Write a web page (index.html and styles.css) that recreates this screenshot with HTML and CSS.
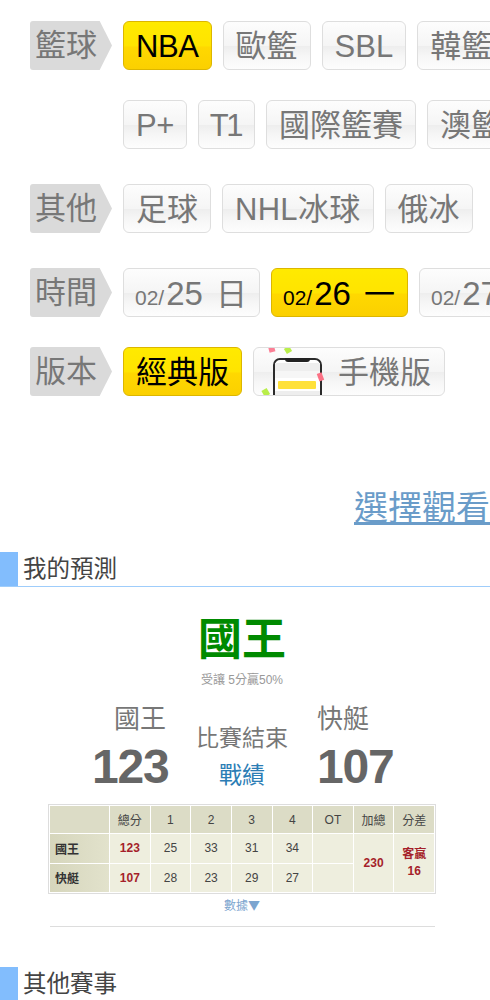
FILE: index.html
```html
<!DOCTYPE html>
<html lang="zh-Hant">
<head>
<meta charset="utf-8">
<title>我的預測</title>
<link rel="stylesheet" href="styles.css">
</head>
<body>
<div class="page">
  <nav class="filters">
    <div class="row">
      <span class="tag">籃球</span>
      <a class="btn on nba">NBA</a><a class="btn">歐籃</a><a class="btn">SBL</a><a class="btn">韓籃</a>
    </div>
    <div class="row row-cont">
      <a class="btn plus">P+</a><a class="btn kern">T1</a><a class="btn">國際籃賽</a><a class="btn">澳籃</a>
    </div>
    <div class="row row-wide">
      <span class="tag">其他</span>
      <a class="btn">足球</a><a class="btn nhl">NHL冰球</a><a class="btn">俄冰</a>
    </div>
    <div class="row row-wide">
      <span class="tag">時間</span>
      <a class="btn date"><small>02/</small><b>25</b><i>日</i></a>
      <a class="btn date on"><small>02/</small><b>26</b><i>一</i></a>
      <a class="btn date"><small>02/</small><b>27</b><i>二</i></a>
    </div>
    <div class="row row-tight">
      <span class="tag">版本</span>
      <a class="btn on">經典版</a>
      <a class="btn mobile">
        <svg class="phone" width="84" height="47" viewBox="0 0 84 47">
          <rect x="15" y="-1" width="6" height="5" fill="#fb7f95" transform="rotate(-15 18 2)"/>
          <rect x="31" y="-1" width="6" height="6" fill="#b9ee4a" transform="rotate(-30 34 2)"/>
          <rect x="9" y="41" width="6" height="7" fill="#b9ee4a" transform="rotate(-30 12 45)"/>
          <rect x="20" y="11" width="47" height="42" rx="6" fill="#fff" stroke="#2b2b2b" stroke-width="2"/>
          <path d="M31 10h25v1a3 3 0 0 1-3 3H34a3 3 0 0 1-3-3z" fill="#222"/>
          <rect x="21" y="15" width="45" height="8" fill="#eee"/>
          <rect x="21" y="23" width="45" height="7" fill="#f6f6f6"/>
          <rect x="24" y="33" width="38" height="8" rx="1" fill="#ffe13b"/>
          <rect x="21" y="43" width="45" height="4" fill="#eee"/>
          <rect x="64" y="25" width="5" height="8" fill="#fb7185" transform="rotate(-20 66 29)"/>
        </svg>
        <span>手機版</span>
      </a>
    </div>
  </nav>

  <a class="watch">選擇觀看</a>

  <h2 class="section first">我的預測</h2>

  <div class="pick">國王</div>
  <div class="odds">受讓 5分贏50%</div>

  <div class="score">
    <div class="team home">
      <div class="name">國王</div>
      <div class="pts">123</div>
    </div>
    <div class="status">
      <div class="state">比賽結束</div>
      <a class="record">戰績</a>
    </div>
    <div class="team away">
      <div class="name">快艇</div>
      <div class="pts">107</div>
    </div>
  </div>

  <table class="box">
    <tr class="head">
      <th class="corner"></th><th>總分</th><th>1</th><th>2</th><th>3</th><th>4</th><th>OT</th><th>加總</th><th>分差</th>
    </tr>
    <tr>
      <th class="side">國王</th><td class="red">123</td><td>25</td><td>33</td><td>31</td><td>34</td><td></td>
      <td class="red strong" rowspan="2">230</td><td class="red strong" rowspan="2">客贏<br>16</td>
    </tr>
    <tr>
      <th class="side">快艇</th><td class="red">107</td><td>28</td><td>23</td><td>29</td><td>27</td><td></td>
    </tr>
  </table>

  <a class="more">數據▼</a>
  <hr class="rule">

  <h2 class="section">其他賽事</h2>
</div>
</body>
</html>
```
FILE: styles.css
```css
* { box-sizing: border-box; }
html, body { margin: 0; padding: 0; background: #fff; }
body { font-family: "Liberation Sans", "Noto Sans CJK TC", sans-serif; }
.page { width: 490px; height: 1000px; overflow: hidden; }

.filters { padding: 21px 0 0 30px; }
.row { display: flex; gap: 11px; height: 49px; white-space: nowrap; }
.row-cont { margin-top: 30px; padding-left: 93px; }
.row-wide { margin-top: 35px; }
.row-tight { margin-top: 30px; }

.tag {
  flex: none;
  width: 82px;
  height: 49px;
  padding-left: 5px;
  font-size: 31px;
  line-height: 50px;
  color: #777;
  background: #dadada;
  border-radius: 3px 0 0 3px;
  clip-path: polygon(0 0, 85% 0, 100% 50%, 85% 100%, 0 100%);
}
.btn {
  flex: none;
  height: 49px;
  padding: 0 12px;
  font-size: 31px;
  line-height: 49px;
  color: #777;
  border: 1px solid #dedede;
  border-radius: 6px;
  background: linear-gradient(#fdfdfd 0%, #f5f5f5 50%, #eeeeee 52%, #f6f6f6 72%, #fdfdfd 100%);
}
.nba { letter-spacing: -0.4px; }
.plus { letter-spacing: -0.5px; }
.kern { letter-spacing: -2.5px; padding-right: 13px; padding-left: 11px; }
.nhl { letter-spacing: 0.3px; }
.btn.on {
  color: #000;
  border-color: #dcb600;
  background: linear-gradient(#ffea00 0%, #ffe400 50%, #ffd800 54%, #fbd000 100%);
}
.date { display: flex; align-items: baseline; width: 137px; padding-left: 11px; }
.date small { font-size: 21px; }
.date b { margin-left: 2px; font-size: 33px; font-weight: 400; }
.date i { font-style: normal; margin-left: 13px; }
.mobile { display: flex; padding: 0 13px 0 0; overflow: hidden; }
.phone { flex: none; display: block; }
.mobile span { line-height: 49px; }

.watch {
  display: block;
  margin-top: 90px;
  padding-left: 354px;
  height: 44px;
  font-size: 34px;
  line-height: 44px;
  white-space: nowrap;
  color: #6a9cc9;
  text-decoration: underline;
  text-underline-offset: 2px;
}
.section {
  height: 35px;
  margin: 0;
  padding-left: 23px;
  font-size: 23.5px;
  font-weight: 400;
  line-height: 35px;
  color: #444;
}
.section.first {
  margin-top: 22px;
  border-bottom: 1px solid #9fcdfb;
  background: linear-gradient(#82bdfd, #82bdfd) left top / 18px 100% no-repeat;
}
.rule + .section {
  margin-top: 40px;
  background: linear-gradient(#82bdfd, #82bdfd) left top / 18px 100% no-repeat;
}

.pick {
  margin-top: 25px;
  padding-right: 6px;
  text-align: center;
  font-size: 44px;
  font-weight: 700;
  line-height: 56px;
  color: #008a00;
}
.odds {
  margin-top: 3px;
  padding-right: 6px;
  text-align: center;
  font-size: 12px;
  line-height: 18px;
  color: #999;
}
.score { display: flex; justify-content: center; margin-top: 12px; padding-right: 6px; }
.team { width: 75px; }
.home { text-align: right; }
.away { text-align: left; }
.name { font-size: 26px; line-height: 36px; color: #777; white-space: nowrap; }
.home .name { padding-right: 1px; }
.away .name { width: 53px; }
.pts { margin-top: 5px; font-size: 48px; font-weight: 700; line-height: 50px; color: #666; letter-spacing: -1.2px; }
.status { width: 150px; padding-top: 22px; text-align: center; }
.state { font-size: 23px; line-height: 30px; color: #777; }
.record { display: block; margin-top: 7px; font-size: 23px; line-height: 30px; color: #2b7db5; }

.box {
  width: 388px;
  height: 90px;
  margin: 12px 0 0 48px;
  table-layout: fixed;
  border-collapse: separate;
  border-spacing: 1px;
  border: 1px solid #ddd;
  font-size: 12px;
  color: #444;
  text-align: center;
}
.box th, .box td { padding: 0; font-weight: 400; background: #eeeede; }
.box .head th { background: #dcdcc6; height: 27px; }
.box .corner, .box th.side { width: 59px; }
.box th.side { background: linear-gradient(90deg, #d6d6bc, #e2e2cc); text-align: left; padding-left: 5px; font-weight: 700; color: #333; }
.box td.red { color: #a51f2a; font-weight: 700; }
.box td.strong { font-weight: 700; line-height: 17px; }

.more {
  display: block;
  margin-top: 3px;
  padding-right: 6px;
  text-align: center;
  font-family: "Noto Sans CJK TC", sans-serif;
  font-size: 12px;
  line-height: 16px;
  color: #7ca5cf;
}
.rule {
  width: 385px;
  height: 1px;
  margin: 13px 0 0 50px;
  border: 0;
  background: #ddd;
}
```
